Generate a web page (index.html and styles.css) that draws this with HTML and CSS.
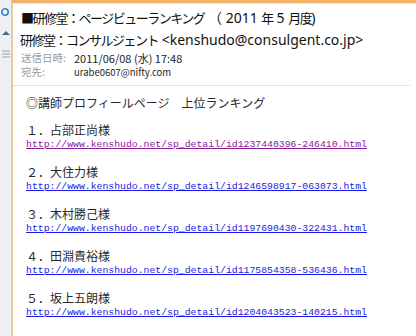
FILE: index.html
```html
<!DOCTYPE html>
<html lang="ja">
<head>
  <meta charset="UTF-8">
  <title>研修堂：ページビューランキング</title>
  <link rel="stylesheet" href="styles.css">
</head>
<body>
  <div class="window">
    <div class="sidebar">
      <svg class="side-icon" width="10" height="10" viewBox="0 0 10 10"><circle cx="4" cy="5" r="3.2" fill="none" stroke="#3b7dd8" stroke-width="1.6"/></svg>
      <svg class="side-icon" width="10" height="10" viewBox="0 0 10 10"><path d="M1 7 L5 3 L9 7 Z" fill="#4a6a8a"/></svg>
      <svg class="side-icon" width="10" height="10" viewBox="0 0 10 10"><path d="M1 2h8M1 5h8M1 8h8" stroke="#9aa4ae" stroke-width="1.2"/></svg>
    </div>
    <div class="mail">
      <div class="mail-header">
        <div class="subject"><span class="jp">■研修堂：ページビューランキング</span> （ 2011 <span class="jp">年</span> 5 <span class="jp">月度</span>)</div>
        <div class="from"><span class="jp">研修堂：コンサルジェント</span> &lt;kenshudo@consulgent.co.jp&gt;</div>
        <div class="meta">
          <span class="meta-label">送信日時:</span>
          <span class="meta-value">2011/06/08 (水) 17:48</span>
        </div>
        <div class="meta">
          <span class="meta-label">宛先:</span>
          <span class="meta-value small">urabe0607@nifty.com</span>
        </div>
      </div>
      <div class="mail-body">
        <p class="intro">◎講師プロフィールページ　上位ランキング</p>
        <div class="rank">
          <div class="rank-name">１．占部正尚様</div>
          <a class="visited" href="#">http://www.kenshudo.net/sp_detail/id1237440396-246410.html</a>
        </div>
        <div class="rank">
          <div class="rank-name">２．大住力様</div>
          <a href="#">http://www.kenshudo.net/sp_detail/id1246598917-063073.html</a>
        </div>
        <div class="rank">
          <div class="rank-name">３．木村勝己様</div>
          <a href="#">http://www.kenshudo.net/sp_detail/id1197690430-322431.html</a>
        </div>
        <div class="rank">
          <div class="rank-name">４．田淵貴裕様</div>
          <a href="#">http://www.kenshudo.net/sp_detail/id1175854358-536436.html</a>
        </div>
        <div class="rank">
          <div class="rank-name">５．坂上五朗様</div>
          <a href="#">http://www.kenshudo.net/sp_detail/id1204043523-140215.html</a>
        </div>
      </div>
    </div>
  </div>
</body>
</html>
```

FILE: styles.css
```css
body {
  margin: 0;
  font-family: "Noto Sans CJK JP", "Noto Sans", sans-serif;
  background: #fff;
  color: #222;
}
.window {
  display: flex;
  height: 336px;
  overflow: hidden;
}
.sidebar {
  width: 11px;
  background: #eef0f3;
  display: flex;
  flex-direction: column;
  align-items: center;
  gap: 11px;
  padding-top: 7px;
}
.side-icon {
  display: block;
}
.mail {
  flex: 1;
  border-left: 2px solid #f0c896;
  border-top: 3px solid #f2b46a;
  box-shadow: inset 0 1px 0 #fbe6c8;
}
.mail-header {
  padding: 4px 0 6px 8px;
  margin-right: 6px;
  border-bottom: 1px dotted #c8c8c8;
}
.subject,
.from {
  font-family: "Noto Sans", "Noto Sans CJK JP", sans-serif;
  font-size: 14px;
  line-height: 22px;
  color: #111;
  white-space: nowrap;
}
.subject .jp,
.from .jp {
  font-family: "Noto Sans CJK JP", sans-serif;
  font-size: 13px;
  letter-spacing: -1.5px;
}
.from {
  margin-left: -1px;
}
.meta {
  display: flex;
  align-items: center;
  height: 14px;
  font-size: 10.5px;
  line-height: 12px;
}
.meta-label {
  width: 53px;
  color: #9a9a9a;
}
.meta-value {
  color: #222;
  font-size: 11px;
}
.meta-value.small {
  font-size: 9.5px;
}
.mail-body {
  padding: 9px 0 0 13px;
  font-size: 12px;
}
.intro {
  margin: 0 0 11px;
  line-height: 16px;
  color: #2a2a2a;
}
.rank {
  margin-bottom: 13px;
}
.rank-name {
  line-height: 16px;
  color: #2a2a2a;
}
.rank a {
  display: block;
  font-family: "Liberation Mono", monospace;
  font-size: 9.8px;
  line-height: 13px;
  color: #1a1ae6;
}
.rank a.visited {
  color: #8a1a9a;
}
```
